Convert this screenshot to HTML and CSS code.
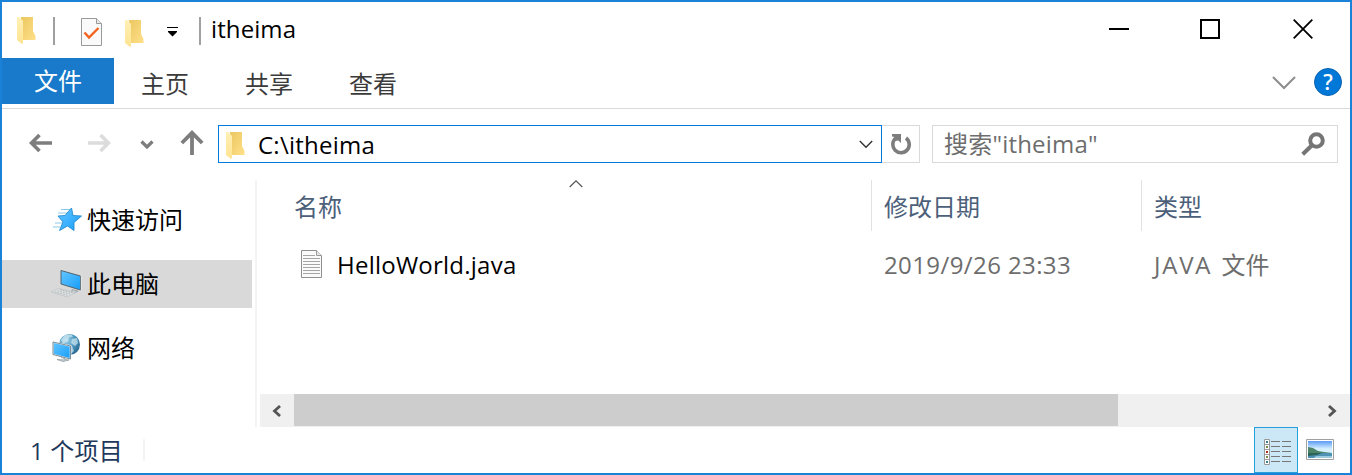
FILE: index.html
```html
<!DOCTYPE html>
<html lang="zh-CN">
<head>
<meta charset="utf-8">
<title>itheima</title>
<link rel="stylesheet" href="styles.css">
</head>
<body>
<svg class="defs" width="0" height="0">
  <defs>
    <linearGradient id="fold" x1="0" y1="0" x2="1" y2="1"><stop offset="0" stop-color="#ebc75f"/><stop offset="1" stop-color="#ffe08a"/></linearGradient>
    <linearGradient id="flap" x1="0" y1="0" x2="0" y2="1"><stop offset="0" stop-color="#fff0b5"/><stop offset="1" stop-color="#ffe391"/></linearGradient>
    <linearGradient id="blue" x1="0" y1="0" x2="1" y2="1"><stop offset="0" stop-color="#62c5ff"/><stop offset=".5" stop-color="#3eb2ff"/><stop offset="1" stop-color="#159cf5"/></linearGradient>
    <radialGradient id="globe" cx=".35" cy=".3" r=".8"><stop offset="0" stop-color="#9bd0e8"/><stop offset=".55" stop-color="#4c94bd"/><stop offset="1" stop-color="#235f8b"/></radialGradient>
    <linearGradient id="sky" x1="0" y1="0" x2="0" y2="1"><stop offset="0" stop-color="#5b9af5"/><stop offset=".45" stop-color="#d3eefe"/><stop offset="1" stop-color="#ddf3ff"/></linearGradient>
    <symbol id="folder" viewBox="0 0 20 28">
      <path d="M4 0h12v14l2.500 5v4H5z" fill="url(#fold)"/>
      <path d="M0 0h2l4 4v22l-1 1-5-4z" fill="url(#flap)"/>
    </symbol>
  </defs>
</svg>
<div class="window">
  <header class="titlebar">
    <svg class="folder app-icon" width="20" height="28"><use href="#folder"/></svg>
    <span class="rule"></span>
    <svg class="check-doc" width="22" height="28" viewBox="0 0 22 28">
      <path d="M.5.5h15l5 5v22H.5z" fill="#fafafa" stroke="#999"/>
      <path d="M15.500 .5V5.500h5" fill="#e8e8e8" stroke="#999"/>
      <path d="M3.500 14.500l4.500 5L17.500 10" fill="none" stroke="#f4631e" stroke-width="2.400"/>
    </svg>
    <svg class="folder new-folder" width="20" height="28"><use href="#folder"/></svg>
    <svg class="customize" width="11" height="10" viewBox="0 0 11 10"><path d="M0 0h11v1H0zM1 4h9v1L5.500 9.500 1 5z"/></svg>
    <span class="rule rule-title"></span>
    <span class="title">itheima</span>
    <div class="controls">
      <svg class="minimize" width="20" height="20" viewBox="0 0 20 20"><path d="M0 9h20v2H0z"/></svg>
      <svg width="20" height="20" viewBox="0 0 20 20"><path d="M1 1h18v18H1z" fill="none" stroke="#000" stroke-width="2"/></svg>
      <svg width="20" height="20" viewBox="0 0 20 20"><path d="M.7.7l18.600 18.600M19.300.7L.7 19.300" fill="none" stroke="#000" stroke-width="1.800"/></svg>
    </div>
  </header>

  <nav class="tabs">
    <span class="tab file">文件</span>
    <span class="tab">主页</span>
    <span class="tab">共享</span>
    <span class="tab">查看</span>
    <svg class="expand" width="24" height="14" viewBox="0 0 24 14"><path d="M1 1l11 11L23 1" fill="none" stroke="#8d8d8d" stroke-width="2"/></svg>
    <span class="help">?</span>
  </nav>

  <div class="toolbar">
    <svg class="back" width="24" height="20" viewBox="0 0 24 20"><path d="M23 10H3M10.500 2l-8 8 8 8" fill="none" stroke="#7d7d7d" stroke-width="3.600"/></svg>
    <svg class="forward" width="24" height="20" viewBox="0 0 24 20"><path d="M1 10h20M13.500 2l8 8-8 8" fill="none" stroke="#dcdcdc" stroke-width="3.600"/></svg>
    <svg class="recent" width="14" height="10" viewBox="0 0 14 10"><path d="M1.500 1.500L7 7l5.500-5.500" fill="none" stroke="#7d7d7d" stroke-width="3.200"/></svg>
    <svg class="up" width="24" height="26" viewBox="0 0 24 26"><path d="M12 25V3M1.800 13L12 2.800 22.200 13" fill="none" stroke="#7d7d7d" stroke-width="3.800"/></svg>
    <div class="address">
      <svg class="folder" width="20" height="28"><use href="#folder"/></svg>
      <span class="path">C:\itheima</span>
      <svg class="drop" width="14" height="9" viewBox="0 0 14 9"><path d="M.8 1L7 7.300 13.200 1" fill="none" stroke="#333" stroke-width="1.400"/></svg>
    </div>
    <div class="refresh">
      <svg width="20" height="22" viewBox="0 0 20 22"><path d="M4.800 5.200A8.200 8.200 0 1 0 15 5" fill="none" stroke="#7d7d7d" stroke-width="3.600"/><path d="M1 1h9v9L7.300 7.500 4 8 3.500 4 1 3.500z" fill="#7d7d7d"/></svg>
    </div>
    <div class="search">
      <span class="hint">搜索"itheima"</span>
      <svg width="24" height="24" viewBox="0 0 24 24"><circle cx="15.500" cy="8.500" r="6.300" fill="none" stroke="#757575" stroke-width="4"/><path d="M11 13.200L1.700 22.300" stroke="#757575" stroke-width="4"/></svg>
    </div>
  </div>

  <main class="content">
    <aside class="sidebar">
      <div class="place">
        <svg width="32" height="30" viewBox="0 0 32 30">
          <path d="M10 4.500h9M7 8h9M4 18h7M2 22h7" stroke="#8bc9ec" stroke-width="1"/>
          <path d="M20.500 3l1.500 7.500 8.500.5-7.500 6.500 0 8-6.500-4.500-8 4.500 3.500-8.500-5-6 7-.5z" fill="url(#blue)" stroke="#268bd0" stroke-width=".9"/>
        </svg>
        <span>快速访问</span>
      </div>
      <div class="place selected">
        <svg width="32" height="30" viewBox="0 0 32 30">
          <path d="M10 1.500L29.500 7v14l-19.500-6z" fill="url(#blue)" stroke="#53656f" stroke-width="1"/>
          <path d="M30.300 7v14.500" stroke="#e8eef0" stroke-width=".8"/>
          <path d="M21 20.500l6 1.500-4 2-8-1.500 6 .2z" fill="#c8cfd3" stroke="#818c92" stroke-width=".6"/>
          <path d="M.5 23l7-3.500 17 4-8 4.500z" fill="#dfe2e3" stroke="#b5babd" stroke-width=".6"/>
          <path d="M4 23l13 3.300M6.500 21.800l13 3.300M9 20.700l13 3.300" stroke="#a0a7ab" stroke-width=".7" stroke-dasharray="1.800 1"/>
        </svg>
        <span>此电脑</span>
      </div>
      <div class="place network">
        <svg width="32" height="30" viewBox="0 0 32 30">
          <circle cx="17.500" cy="11.500" r="10.500" fill="url(#globe)"/>
          <path d="M9 7l4-5 6-.5 2 2-4 1-1 4-5 2zM20 6l5-1 1 5-3 3-4-3zM15 12l5 1 2 5-4 4-4-4z" fill="#d9eef4" fill-opacity=".65"/>
          <path d="M1 9L18.500 13v13l-17.500-4.500z" fill="url(#blue)" stroke="#f0f5f7" stroke-width="1.600"/>
          <path d="M1 9L18.500 13v13l-17.500-4.500z" fill="none" stroke="#5f737d" stroke-width=".8"/>
          <path d="M9 24.500l4 1v1.500l-8-.5 6 2 6-1.500-4-.5" fill="#d5dcdf" stroke="#89959b" stroke-width=".7"/>
        </svg>
        <span>网络</span>
      </div>
    </aside>
    <section class="files">
      <div class="row head">
        <div class="cell name">名称
          <svg class="sort" width="14" height="8" viewBox="0 0 14 8"><path d="M.7 7L7 .9 13.300 7" fill="none" stroke="#555" stroke-width="1.200"/></svg>
        </div>
        <div class="cell date">修改日期</div>
        <div class="cell type">类型</div>
      </div>
      <div class="row file-row">
        <div class="cell name">
          <svg class="doc" width="22" height="28" viewBox="0 0 22 28"><path d="M.5.5h15l5 5v22H.5z" fill="#fafafa" stroke="#8f8f8f"/><path d="M15.500.5v5h5" fill="#e8e8e8" stroke="#999"/><path d="M2 5.500h12M2 8.500h17M2 11.500h17M2 14.500h17M2 17.500h17M2 20.500h17M2 23.500h17" stroke="#a5a5a5"/></svg>
          <span class="filename">HelloWorld.java</span>
        </div>
        <div class="cell date"><span class="stamp">2019/9/26 23:33</span></div>
        <div class="cell type"><span class="kind"><span class="ext">JAVA</span> 文件</span></div>
      </div>
      <div class="scrollbar">
        <span class="arrow"><svg width="9" height="12" viewBox="0 0 9 12"><path d="M8 1L2.500 6 8 11" fill="none" stroke="#555" stroke-width="2.800"/></svg></span>
        <span class="thumb"></span>
        <span class="arrow end"><svg width="9" height="12" viewBox="0 0 9 12"><path d="M1 1l5.500 5L1 11" fill="none" stroke="#555" stroke-width="2.800"/></svg></span>
      </div>
    </section>
  </main>

  <footer class="status">
    <span class="count">1 个项目</span>
    <span class="split"></span>
    <div class="view details">
      <svg width="28" height="27" viewBox="0 0 28 27">
        <path d="M.5.5h5v25h-5z" fill="#fff" stroke="#999"/><path d="M0 5.500h6M0 10.500h6M0 15.500h6M0 20.500h6" stroke="#999"/>
        <path d="M2 2h2v2H2zM2 22h2v2H2z" fill="#3c7e90"/><path d="M2 7h2v2H2zM2 17h2v2H2z" fill="#7c8a4a"/><path d="M2 12h2v2H2z" fill="#a42e20"/>
        <path d="M7 2.500h9M18 2.500h9M7 7.500h9M18 7.500h9M7 12.500h9M18 12.500h9M7 17.500h9M18 17.500h9M7 22.500h9M18 22.500h9" stroke="#777"/>
      </svg>
    </div>
    <div class="view large">
      <svg width="28" height="21" viewBox="0 0 28 21">
        <path d="M.5.5h27v20H.5z" fill="#fff" stroke="#a0a0a0"/><path d="M2 2h24v17H2z" fill="url(#sky)"/>
        <path d="M2 8l5 1 5 3 6 1 8 1v1H2z" fill="#4b8468"/><path d="M2 14h24v5H2z" fill="#4d91b5"/><path d="M2 14h14l-5 2-9 1z" fill="#2d6458"/><path d="M10 17h16v2H8z" fill="#9cc9de"/>
      </svg>
    </div>
  </footer>
</div>
</body>
</html>
```
FILE: styles.css
```css
* { box-sizing: border-box; }
body { margin: 0; }
.defs { display: block; height: 0; }
svg { display: block; flex: none; }
.window {
  width: 1352px; height: 475px;
  display: flex; flex-direction: column;
  border: 2px solid #1a82d8; background: #fff; color: #000;
  font: 24px/32px "Open Sans", "Noto Sans CJK SC", sans-serif;
  white-space: nowrap;
}

.titlebar { height: 56px; display: flex; align-items: flex-start; padding: 15px 37px 0 15px; }
.rule { width: 2px; height: 28px; background: #a0a0a0; margin-left: 16px; }
.check-doc { margin: 1px 0 0 26px; }
.new-folder { margin: 3px 0 0 22px; }
.customize { margin: 10px 0 0 22px; }
.rule-title { margin-left: 21px; }
.title { margin: -4px 0 0 10px; letter-spacing: .1px; }
.controls { display: flex; gap: 72px; margin: 2px 0 0 auto; }
.controls .minimize { margin-right: -1px; }
.controls svg:last-child { margin-left: 1px; }

.tabs { height: 51px; flex: none; display: flex; align-items: flex-start; border-bottom: 1px solid #dadada; color: #3b3b3b; padding-right: 8px; }
.tab { padding-top: 9px; margin-right: 56px; line-height: 34px; }
.file { width: 112px; height: 46px; margin-right: 27px; padding-top: 6px; text-align: center; background: #1979ca; color: #fff; }
.expand { margin: 18px 0 0 auto; }
.help { width: 28px; height: 28px; margin: 10px 0 0 18px; border: 1px solid #0b63b2; border-radius: 50%; background: #0078d7; color: #fff; font-size: 21px; font-weight: 600; line-height: 26px; text-align: center; }

.toolbar { height: 71px; flex: none; display: flex; align-items: flex-start; padding: 16px 12px 0 27px; }
.back, .forward { margin-top: 8px; }
.forward { margin-left: 34px; }
.recent { margin: 15px 0 0 29px; }
.up { margin: 5px 0 0 26px; }
.address { width: 664px; flex: none; height: 38px; display: flex; align-items: center; margin-left: 14px; padding: 0 8px 0 7px; border: 1px solid #0078d7; }
.address .folder { margin-top: 4px; }
.path { margin: 2px 0 0 12px; letter-spacing: .25px; }
.drop { margin-left: auto; }
.refresh { width: 38px; height: 38px; display: flex; align-items: center; justify-content: center; padding-left: 1px; border: 1px solid #d9d9d9; border-left: 0; }
.search { width: 406px; height: 38px; display: flex; align-items: center; justify-content: space-between; margin-left: 12px; padding: 0 12px 0 11px; border: 1px solid #d9d9d9; color: #6d6d6d; }
.hint { letter-spacing: .2px; }

.content { height: 247px; flex: none; display: flex; }
.sidebar { width: 255px; padding-top: 16px; display: flex; flex-direction: column; gap: 16px; border-right: 2px solid #f4f4f4; }
.place { width: 250px; height: 48px; display: flex; align-items: center; gap: 4px; padding: 0 0 0 49px; }
.network { padding-left: 50px; gap: 3px; }
.selected { background: #d9d9d9; }
.files { flex: 1; display: flex; flex-direction: column; padding-left: 3px; }
.row { display: flex; }
.head { height: 51px; color: #4c607a; }
.cell { display: flex; align-items: center; }
.name { width: 611px; padding-left: 34px; }
.date { width: 270px; padding-left: 12px; }
.type { flex: 1; padding-left: 12px; }
.head .date, .head .type { border-left: 1px solid #e2e2e2; }
.head .cell { padding-top: 3px; }
.sort { margin: -46px 0 0 227px; }
.file-row { height: 68px; color: #6d6d6d; }
.file-row .name { padding-left: 41px; gap: 14px; }
.doc { margin-top: -2px; }
.file-row .date, .file-row .type { padding-left: 13px; }
.filename { color: #000; letter-spacing: .24px; }
.stamp { letter-spacing: .4px; }
.ext { letter-spacing: 1.8px; margin-right: 3px; }
.scrollbar { height: 33px; display: flex; margin-top: auto; background: #f0f0f0; }
.arrow { width: 34px; display: flex; align-items: center; justify-content: center; padding-right: 2px; }
.end { margin-left: auto; padding-right: 1px; }
.thumb { width: 824px; height: 32px; background: #cdcdcd; }

.status { height: 46px; flex: none; display: flex; padding-right: 8px; color: #1e395b; }
.count { margin: 8px 0 0 28px; letter-spacing: .2px; }
.split { width: 2px; height: 22px; margin: 12px 0 0 20px; background: #f4f4f4; }
.view { width: 44px; height: 46px; display: flex; align-items: center; justify-content: center; }
.details { margin-left: auto; padding: 4px 0 0 4px; background: #cce8f6; border: 1px solid #26a0da; }
.large { align-items: flex-start; padding: 12px 0 0 0; }
```
